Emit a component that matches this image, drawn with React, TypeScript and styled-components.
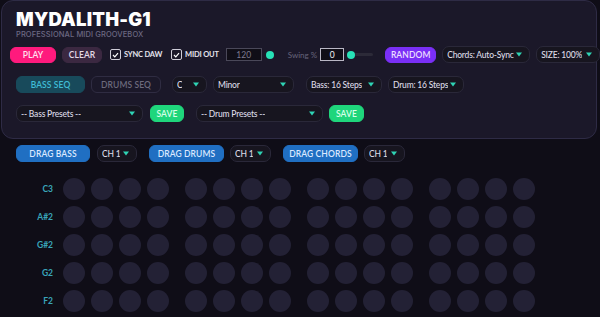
import React from "react";
import styled, { createGlobalStyle } from "styled-components";

const Global = createGlobalStyle`
  html, body { margin: 0; padding: 0; background: #0f0d17; }
  body { font-family: Lato, "Noto Sans", "DejaVu Sans", sans-serif; width: 600px; height: 317px; overflow: hidden; }
  * { box-sizing: border-box; }
`;

const Page = styled.div`
  width: 600px;
  height: 317px;
  background: #0f0d17;
  overflow: hidden;
`;

const Panel = styled.header`
  margin: 0 3px 0 1px;
  height: 139px;
  background: #1b1829;
  border: 1px solid #2e2b45;
  border-radius: 12px;
  padding: 9px 0 0 14px;
  display: flex;
  flex-direction: column;
`;

const Title = styled.h1`
  margin: 0;
  font-family: Inter, "DejaVu Sans", sans-serif;
  font-size: 18.5px;
  line-height: 18px;
  font-weight: 900;
  color: #ffffff;
  letter-spacing: 0.2px;
`;

const Subtitle = styled.div`
  margin-top: 3px;
  font-family: Inter, "DejaVu Sans", sans-serif;
  font-size: 7.5px;
  line-height: 8px;
  font-weight: 500;
  color: #6c6882;
  letter-spacing: 0.1px;
`;

const Row = styled.div<{ $top: number; $shift?: number; $gap?: number }>`
  display: flex;
  align-items: center;
  gap: ${(p) => p.$gap ?? 6}px;
  margin-top: ${(p) => p.$top}px;
  margin-left: ${(p) => p.$shift ?? 0}px;
  white-space: nowrap;
`;

const Group = styled.div<{ $gap?: number }>`
  display: flex;
  align-items: center;
  gap: ${(p) => p.$gap ?? 6}px;
`;

type Tone = "play" | "clear" | "random" | "teal" | "ghost" | "save" | "blue";
const tones: Record<Tone, { bg: string; fg: string; border: string }> = {
  play: { bg: "#ff1a7d", fg: "#ffe3f0", border: "#ff1a7d" },
  clear: { bg: "#3b2841", fg: "#e6dbe8", border: "#3b2841" },
  random: { bg: "#7a2ff6", fg: "#eadfff", border: "#7a2ff6" },
  teal: { bg: "#184a5b", fg: "#3fbcd6", border: "#184a5b" },
  ghost: { bg: "transparent", fg: "#6c6a7c", border: "#2f2c42" },
  save: { bg: "#1fd67c", fg: "#d9ffe9", border: "#1fd67c" },
  blue: { bg: "#206fc2", fg: "#dbe9ff", border: "#206fc2" },
};

const Button = styled.button<{ $tone: Tone; $w: number; $h?: number }>`
  width: ${(p) => p.$w}px;
  height: ${(p) => p.$h ?? 17}px;
  padding: 0;
  border-radius: 6px;
  border: 1px solid ${(p) => tones[p.$tone].border};
  background: ${(p) => tones[p.$tone].bg};
  color: ${(p) => tones[p.$tone].fg};
  font-family: inherit;
  font-size: 8.5px;
  font-weight: 600;
  letter-spacing: 0.1px;
  display: flex;
  align-items: center;
  justify-content: center;
  white-space: nowrap;
  flex: none;
`;

const SelectBox = styled.div<{ $w: number; $h?: number }>`
  width: ${(p) => p.$w}px;
  height: ${(p) => p.$h ?? 17}px;
  border-radius: 7px;
  border: 1px solid #2a2839;
  background: #17151f;
  color: #dcdae6;
  font-size: 8.5px;
  font-weight: 500;
  letter-spacing: -0.2px;
  white-space: nowrap;
  display: flex;
  align-items: center;
  justify-content: space-between;
  gap: 2px;
  padding: 0 7px 0 4px;
  flex: none;
  & > span {
    overflow: hidden;
  }
  & > svg {
    flex: none;
  }
`;

const Caret = () => (
  <svg width="6" height="5" viewBox="0 0 6 5">
    <path d="M0 0.5 L6 0.5 L3 4.5 Z" fill="#2fd3b4" />
  </svg>
);

const Select = ({ label, w }: { label: string; w: number }) => (
  <SelectBox $w={w}>
    <span>{label}</span>
    <Caret />
  </SelectBox>
);

const CheckLabel = styled.label`
  display: flex;
  align-items: center;
  gap: 3px;
  font-size: 7.5px;
  font-weight: 700;
  letter-spacing: -0.2px;
  color: #e4e2ec;
`;

const Box = styled.span`
  width: 11px;
  height: 11px;
  border: 1px solid #cfcdd8;
  border-radius: 2px;
  display: flex;
  align-items: center;
  justify-content: center;
`;

const Check = ({ label }: { label: string }) => (
  <CheckLabel>
    <Box>
      <svg width="7" height="6" viewBox="0 0 7 6">
        <path d="M1 3 L2.8 4.8 L6 1.2" stroke="#ffffff" strokeWidth="1.2" fill="none" />
      </svg>
    </Box>
    {label}
  </CheckLabel>
);

const NumInput = styled.div<{ $w: number; $light?: boolean }>`
  width: ${(p) => p.$w}px;
  height: 13px;
  border: 1px solid ${(p) => (p.$light ? "#b9b7c4" : "#4a4859")};
  background: #100e17;
  color: ${(p) => (p.$light ? "#f2f2f5" : "#7d7a8f")};
  font-size: 8.5px;
  display: flex;
  align-items: center;
  justify-content: center;
  flex: none;
`;

const Dot = styled.span`
  width: 8px;
  height: 8px;
  border-radius: 50%;
  background: #27e2b7;
  flex: none;
`;

const Dim = styled.span`
  font-size: 8px;
  color: #66637a;
`;

const Slider = styled.div`
  width: 26px;
  height: 8px;
  display: flex;
  align-items: center;
  position: relative;
  flex: none;
  &::before {
    content: "";
    position: absolute;
    left: 0;
    right: 0;
    height: 3px;
    border-radius: 2px;
    background: #2c2a38;
  }
  &::after {
    content: "";
    position: absolute;
    left: 0;
    width: 8px;
    height: 8px;
    border-radius: 50%;
    background: #27e2b7;
  }
`;

const DragRow = styled.div`
  display: flex;
  align-items: center;
  gap: 12px;
  margin: 6px 0 0 16px;
`;

const Grid = styled.div`
  display: flex;
  flex-direction: column;
  gap: 6px;
  margin: 16px 0 0 15px;
`;

const NoteRow = styled.div`
  display: flex;
  align-items: center;
`;

const Note = styled.span`
  width: 38px;
  margin-right: 10px;
  text-align: right;
  font-size: 8.5px;
  font-weight: 700;
  color: #39a5ba;
`;

const Steps = styled.div`
  display: flex;
  gap: 16px;
`;

const Pad = styled.span`
  width: 22px;
  height: 22px;
  border-radius: 50%;
  background: #232135;
  flex: none;
`;

const notes = ["C3", "A#2", "G#2", "G2", "F2"];

export default function App() {
  return (
    <Page>
      <Global />
      <Panel>
        <Title>MYDALITH-G1</Title>
        <Subtitle>PROFESSIONAL MIDI GROOVEBOX</Subtitle>
        <Row $top={7} $shift={-6}>
          <Button $tone="play" $w={46} $h={16}>PLAY</Button>
          <Button $tone="clear" $w={40} $h={16}>CLEAR</Button>
          <Group $gap={9} style={{ marginLeft: 2 }}>
            <Check label="SYNC DAW" />
            <Check label="MIDI OUT" />
          </Group>
          <NumInput $w={36} style={{ marginLeft: 1 }}>120</NumInput>
          <Dot style={{ marginLeft: -2 }} />
          <Dim style={{ marginLeft: 8 }}>Swing %</Dim>
          <NumInput $w={24} $light style={{ marginLeft: -3 }}>0</NumInput>
          <Slider style={{ marginLeft: -3 }} />
          <Button $tone="random" $w={51} $h={16} style={{ marginLeft: 6 }}>RANDOM</Button>
          <Select label="Chords: Auto-Sync" w={88} />
          <Select label="SIZE: 100%" w={64} />
        </Row>
        <Row $top={13} $gap={11}>
          <Group>
            <Button $tone="teal" $w={69}>BASS SEQ</Button>
            <Button $tone="ghost" $w={70}>DRUMS SEQ</Button>
          </Group>
          <Group>
            <Select label="C" w={35} />
            <Select label="Minor" w={81} />
          </Group>
          <Group style={{ marginLeft: 1 }}>
            <Select label="Bass: 16 Steps" w={76} />
            <Select label="Drum: 16 Steps" w={76} />
          </Group>
        </Row>
        <Row $top={12} $gap={12}>
          <Group $gap={7}>
            <Select label="-- Bass Presets --" w={127} />
            <Button $tone="save" $w={34}>SAVE</Button>
          </Group>
          <Group>
            <Select label="-- Drum Presets --" w={127} />
            <Button $tone="save" $w={35}>SAVE</Button>
          </Group>
        </Row>
      </Panel>
      <DragRow>
        <Group $gap={7}>
          <Button $tone="blue" $w={74}>DRAG BASS</Button>
          <Select label="CH 1" w={40} />
        </Group>
        <Group>
          <Button $tone="blue" $w={75}>DRAG DRUMS</Button>
          <Select label="CH 1" w={41} />
        </Group>
        <Group>
          <Button $tone="blue" $w={75}>DRAG CHORDS</Button>
          <Select label="CH 1" w={41} />
        </Group>
      </DragRow>
      <Grid>
        {notes.map((n) => (
          <NoteRow key={n}>
            <Note>{n}</Note>
            <Steps>
              {[0, 1, 2, 3].map((g) => (
                <Group key={g}>
                  {[0, 1, 2, 3].map((i) => (
                    <Pad key={i} />
                  ))}
                </Group>
              ))}
            </Steps>
          </NoteRow>
        ))}
      </Grid>
    </Page>
  );
}
